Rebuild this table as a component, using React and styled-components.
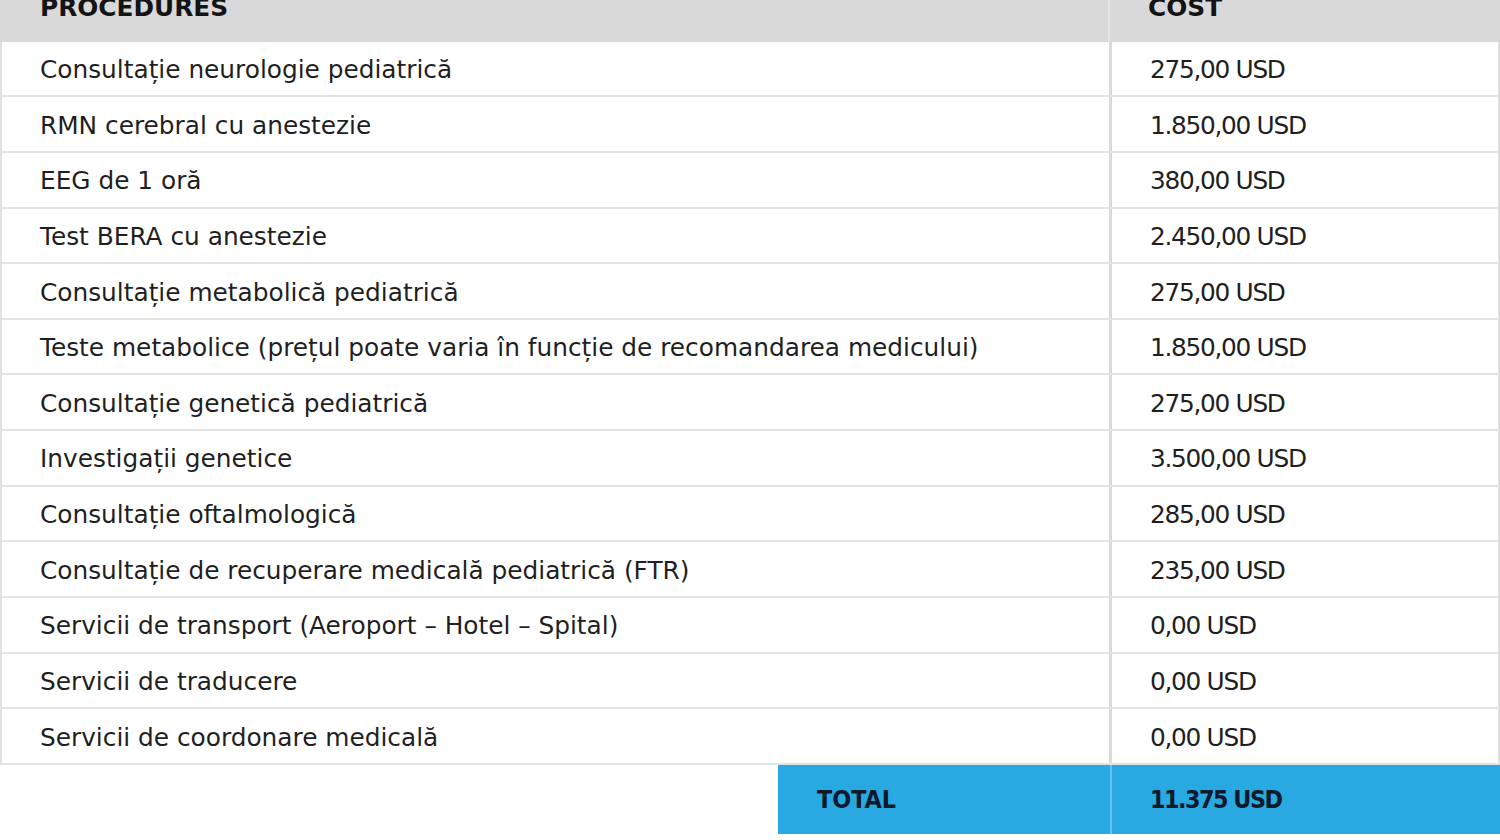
import React from "react";
import styled, { createGlobalStyle } from "styled-components";

const GlobalStyle = createGlobalStyle`
  html, body {
    margin: 0;
    padding: 0;
    background: #ffffff;
  }
  body {
    width: 1500px;
    height: 840px;
    overflow: hidden;
    font-family: "DejaVu Sans", "Liberation Sans", sans-serif;
    color: #1f1f1f;
  }
`;

const Table = styled.div`
  width: 1500px;
  margin-top: -27.7px;
  display: flex;
  flex-direction: column;
`;

const HeaderRow = styled.div`
  display: grid;
  grid-template-columns: 1110px 1fr;
  height: 69.4px;
  background: #d9d9d9;
`;

const HeadCell = styled.div`
  display: flex;
  align-items: center;
  padding-left: ${(p) => (p.$first ? "40px" : "38px")};
  font-size: 24.8px;
  font-weight: 700;
  letter-spacing: 0;
  color: #141414;
  text-transform: uppercase;
  border-right: ${(p) => (p.$first ? "2px solid #e6e6e6" : "none")};
`;

const Row = styled.div`
  display: grid;
  grid-template-columns: 1110px 1fr;
  height: 55.64px;
  box-sizing: border-box;
  border-left: 2px solid #e1e1e1;
  border-right: 2px solid #e1e1e1;
  border-bottom: 2px solid #e3e3e3;
  background: #ffffff;
`;

const Cell = styled.div`
  display: flex;
  align-items: center;
  padding-top: 2px;
  padding-left: ${(p) => (p.$first ? "38px" : "38px")};
  font-size: 24.8px;
  letter-spacing: ${(p) => (p.$num ? "-1.3px" : "0")};
  white-space: nowrap;
  color: #1f1f1f;
  border-right: ${(p) => (p.$first ? "3px solid #dadada" : "none")};
`;

const TotalRow = styled.div`
  display: grid;
  grid-template-columns: 778px 332px 1fr;
  height: 69px;
`;

const Spacer = styled.div`
  background: #ffffff;
`;

const TotalCell = styled.div`
  display: flex;
  align-items: center;
  padding-left: ${(p) => (p.$amount ? "38px" : "39px")};
  background: #28a9e1;
  font-family: "DejaVu Sans Condensed", "DejaVu Sans", sans-serif;
  font-stretch: condensed;
  font-weight: 700;
  font-size: 24.8px;
  letter-spacing: ${(p) => (p.$amount ? "-1.5px" : "0")};
  color: #0e1a2b;
  border-left: ${(p) => (p.$amount ? "2px solid #62c4ec" : "none")};
`;

const rows = [
  ["Consultație neurologie pediatrică", "275,00 USD"],
  ["RMN cerebral cu anestezie", "1.850,00 USD"],
  ["EEG de 1 oră", "380,00 USD"],
  ["Test BERA cu anestezie", "2.450,00 USD"],
  ["Consultație metabolică pediatrică", "275,00 USD"],
  [
    "Teste metabolice (prețul poate varia în funcție de recomandarea medicului)",
    "1.850,00 USD",
  ],
  ["Consultație genetică pediatrică", "275,00 USD"],
  ["Investigații genetice", "3.500,00 USD"],
  ["Consultație oftalmologică", "285,00 USD"],
  ["Consultație de recuperare medicală pediatrică (FTR)", "235,00 USD"],
  ["Servicii de transport (Aeroport – Hotel – Spital)", "0,00 USD"],
  ["Servicii de traducere", "0,00 USD"],
  ["Servicii de coordonare medicală", "0,00 USD"],
];

export default function App() {
  return (
    <>
      <GlobalStyle />
      <Table>
        <HeaderRow>
          <HeadCell $first>Procedures</HeadCell>
          <HeadCell>Cost</HeadCell>
        </HeaderRow>
        {rows.map(([name, cost]) => (
          <Row key={name}>
            <Cell $first>{name}</Cell>
            <Cell $num>{cost}</Cell>
          </Row>
        ))}
        <TotalRow>
          <Spacer />
          <TotalCell>TOTAL</TotalCell>
          <TotalCell $amount>11.375 USD</TotalCell>
        </TotalRow>
      </Table>
    </>
  );
}
